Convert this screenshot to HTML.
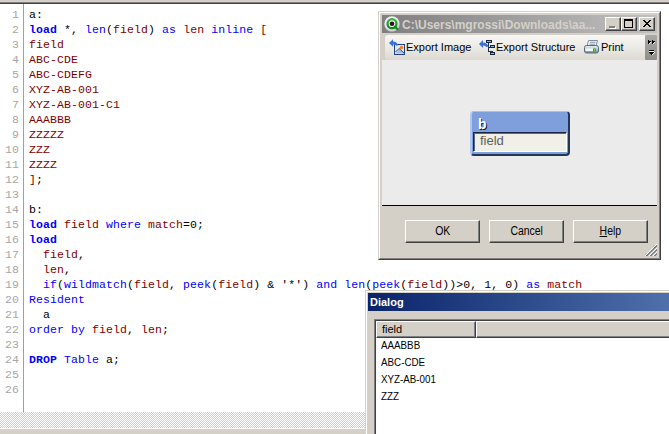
<!DOCTYPE html>
<html><head><meta charset="utf-8">
<style>
*{margin:0;padding:0;box-sizing:border-box}
html,body{width:669px;height:434px;overflow:hidden;background:#fff;position:relative}
body{font-family:"Liberation Sans",sans-serif}
.abs{position:absolute}
#topbar{left:0;top:0;width:669px;height:4px;background:linear-gradient(#d4d0c8 0,#d4d0c8 2px,#808080 2px,#808080 3px,#404040 3px)}
#gutter{left:0;top:4px;width:23px;height:408px;background:#fff}
#gline{left:23px;top:4px;width:1px;height:408px;background:#a0a0a0}
#nums{left:0;top:6.5px;width:19px;font-family:"Liberation Mono",monospace;font-size:11.5px;line-height:15px;color:#a6a6a6;text-align:right;letter-spacing:0.1px;white-space:pre}
#code{left:29px;top:6.5px;font-family:"Liberation Mono",monospace;font-size:11.5px;line-height:15px;color:#000;letter-spacing:0.1px;white-space:pre}
.k{color:#0000ff}
.b{color:#0000ff;font-weight:bold}
.f{color:#800000}
#split{left:0;top:412px;width:669px;height:16px}
#botw{left:0;top:428px;width:669px;height:1px;background:#fff}
#botf{left:0;top:429px;width:669px;height:5px;background:#d4d0c8}

/* dialog 1 */
#d1{left:378px;top:11px;width:283px;height:249px;background:#d4d0c8;border-top:1px solid #d4d0c8;border-left:1px solid #d4d0c8;border-right:1px solid #404040;border-bottom:1px solid #404040}
#d1i{left:0;top:0;right:0;bottom:0;border-top:1px solid #fff;border-left:1px solid #fff;border-right:1px solid #808080;border-bottom:1px solid #808080}
#t1{left:382px;top:15px;width:275px;height:18px;background:linear-gradient(to right,#808080,#c0c0c0)}
#t1txt{left:402px;top:19px;font-size:12px;font-weight:bold;color:#d4d0c8;white-space:nowrap;line-height:13px}
.cb{position:absolute;top:17px;width:16px;height:14px;background:#d4d0c8;border-top:1px solid #fff;border-left:1px solid #fff;border-right:1px solid #404040;border-bottom:1px solid #404040;box-shadow:inset -1px -1px 0 #808080}
#tb{left:385px;top:35px;width:261px;height:25px;border-radius:3px 0 0 3px;background:linear-gradient(#f8f7f4,#e9e7e1 60%,#dcd9d1)}
#chev{left:645px;top:35px;width:12px;height:25px;background:linear-gradient(#aaa9a5,#8e8e8c);border-radius:1px}
.tt{position:absolute;top:41px;font-size:11px;line-height:13px;color:#000;white-space:nowrap}
#c1{left:382px;top:60px;width:275px;height:145px;background:#ebebeb}
#sep{left:382px;top:205px;width:275px;height:1px;background:#000}
.btn{position:absolute;top:220px;width:75px;height:23px;background:#d4d0c8;border-top:1px solid #fff;border-left:1px solid #fff;border-right:1px solid #404040;border-bottom:1px solid #404040;box-shadow:inset -1px -1px 0 #808080;font-size:11px;line-height:20px;text-align:center;color:#000}

.bt{display:inline-block;font-size:12px;transform:scaleX(0.87);transform-origin:50% 50%}
/* table box */
#box{left:470px;top:111px;width:100px;height:45px;border-radius:4px;background:#7f9fdc;border-top:1px solid #a9bff0;border-left:2px solid #b2c6f2;border-right:2px solid #243558;border-bottom:2px solid #243558}
#boxt{left:478px;top:117px;font-family:"Liberation Sans",sans-serif;font-weight:bold;font-size:14px;color:#fff;text-shadow:1px 1px 0 #101828;line-height:15px}
#fld{left:473px;top:132px;width:94px;height:20px;background:#f0efe8;border-top:1px solid #1c2646;border-left:1px solid #1c2646;border-bottom:1px solid #fff;border-right:1px solid #fff;box-shadow:inset 1px 1px 0 #56668c}
#fldt{left:480px;top:133px;font-size:13px;color:#5e5e5e;line-height:15px}

/* dialog 2 */
#d2{left:365px;top:290px;width:310px;height:150px;background:#d4d0c8;border-top:1px solid #d4d0c8;border-left:1px solid #d4d0c8}
#d2i{left:0;top:0;right:0;bottom:0;border-top:1px solid #fff;border-left:1px solid #fff}
#t2{left:368px;top:293px;width:301px;height:18px;background:linear-gradient(to right,#0a246a,#4f70ab)}
#t2txt{left:370px;top:296px;font-size:11px;font-weight:bold;color:#fff;line-height:13px}
#lv{left:374px;top:319px;width:300px;height:120px;background:#fff;border-top:1px solid #808080;border-left:1px solid #808080}
#lvi{left:375px;top:320px;width:300px;height:120px;border-top:1px solid #404040;border-left:1px solid #404040}
.hd{position:absolute;top:321px;height:17px;background:#d4d0c8;border-top:1px solid #fff;border-left:1px solid #fff;border-right:1px solid #404040;border-bottom:1px solid #404040;box-shadow:inset -1px -1px 0 #808080;font-size:11px;line-height:14px;padding-left:5px;color:#000}
.li{position:absolute;left:381px;font-size:11px;line-height:13px;color:#000;transform:scaleX(0.89);transform-origin:0 0}
</style></head><body>
<div id="topbar" class="abs"></div>
<div id="gline" class="abs"></div>
<div id="nums" class="abs">1
2
3
4
5
6
7
8
9
10
11
12
13
14
15
16
17
18
19
20
21
22
23
24
25
26</div>
<div id="code" class="abs">a:
<span class="b">load</span> *, <span class="k">len</span>(<span class="f">field</span>) <span class="k">as</span> <span class="f">len</span> <span class="k">inline</span> <span class="f">[</span>
<span class="f">field</span>
<span class="f">ABC-CDE</span>
<span class="f">ABC-CDEFG</span>
<span class="f">XYZ-AB-001</span>
<span class="f">XYZ-AB-001-C1</span>
<span class="f">AAABBB</span>
<span class="f">ZZZZZ</span>
<span class="f">ZZZ</span>
<span class="f">ZZZZ</span>
<span class="f">]</span>;

b:
<span class="b">load</span> <span class="f">field</span> <span class="k">where</span> <span class="f">match</span>=0;
<span class="b">load</span>
  <span class="f">field</span>,
  <span class="f">len</span>,
  <span class="k">if</span>(<span class="k">wildmatch</span>(<span class="f">field</span>, <span class="k">peek</span>(<span class="f">field</span>) &amp; '*') <span class="k">and</span> <span class="k">len</span>(<span class="k">peek</span>(<span class="f">field</span>))&gt;0, 1, 0) <span class="k">as</span> <span class="f">match</span>
<span class="k">Resident</span>
  a
<span class="k">order by</span> <span class="f">field</span>, <span class="f">len</span>;

<span class="b">DROP</span> <span class="k">Table</span> a;</div>
<svg id="split" class="abs" width="669" height="16" shape-rendering="crispEdges"><defs><pattern id="chk" width="2" height="2" patternUnits="userSpaceOnUse"><rect width="2" height="2" fill="#d4d0c8"/><rect width="1" height="1" fill="#fff"/><rect x="1" y="1" width="1" height="1" fill="#fff"/></pattern></defs><rect width="669" height="16" fill="url(#chk)"/></svg>
<div id="botw" class="abs"></div>
<div id="botf" class="abs"></div>

<!-- dialog 1 -->
<div id="d1" class="abs"><div id="d1i" class="abs"></div></div>
<div id="t1" class="abs"></div>
<div id="t1txt" class="abs">C:\Users\mgrossi\Downloads\aa...</div>
<div class="cb" style="left:605px"></div>
<div class="cb" style="left:621px"></div>
<div class="cb" style="left:639px"></div>
<svg class="abs" style="left:600px;top:15px" width="60" height="18" shape-rendering="crispEdges">
<rect x="10" y="12" width="6" height="2" fill="#fff"/><rect x="9" y="11" width="6" height="2" fill="#808080"/>
<rect x="24" y="4" width="9" height="2" fill="#000"/><rect x="24" y="4" width="1" height="9" fill="#000"/><rect x="32" y="4" width="1" height="9" fill="#000"/><rect x="24" y="12" width="9" height="1" fill="#000"/>
</svg>
<svg class="abs" style="left:643px;top:20px" width="9" height="8" shape-rendering="crispEdges" fill="#000">
<rect x="0" y="0" width="2" height="1"/><rect x="6" y="0" width="2" height="1"/>
<rect x="1" y="1" width="2" height="1"/><rect x="5" y="1" width="2" height="1"/>
<rect x="2" y="2" width="4" height="1"/><rect x="3" y="3" width="2" height="1"/>
<rect x="2" y="4" width="4" height="1"/><rect x="1" y="5" width="2" height="1"/><rect x="5" y="5" width="2" height="1"/>
<rect x="0" y="6" width="2" height="1"/><rect x="6" y="6" width="2" height="1"/>
</svg>
<svg class="abs" style="left:382px;top:15px" width="20" height="18">
<defs><radialGradient id="qg" cx="0.45" cy="0.35" r="0.75"><stop offset="0" stop-color="#ffffff"/><stop offset="0.6" stop-color="#ebe8f0"/><stop offset="1" stop-color="#a8a8b0"/></radialGradient>
<linearGradient id="qgr" x1="0" y1="0" x2="0" y2="1"><stop offset="0" stop-color="#3cb43c"/><stop offset="1" stop-color="#108810"/></linearGradient></defs>
<circle cx="10" cy="9" r="7.7" fill="url(#qg)"/>
<circle cx="10" cy="8.7" r="4.5" fill="none" stroke="url(#qgr)" stroke-width="2.3"/>
<line x1="12.8" y1="11.6" x2="15.2" y2="14" stroke="#129012" stroke-width="2.2" stroke-linecap="round"/>
<circle cx="10" cy="8.7" r="2.3" fill="#1e1e1e"/>
</svg>
<div id="tb" class="abs"></div>
<div id="chev" class="abs"></div>
<svg class="abs" style="left:645px;top:35px" width="12" height="25" shape-rendering="crispEdges">
<rect x="3" y="5" width="1" height="4" fill="#000"/><rect x="4" y="6" width="1" height="2" fill="#000"/><rect x="5" y="6" width="1" height="1" fill="#000"/>
<rect x="7" y="5" width="1" height="4" fill="#000"/><rect x="8" y="6" width="1" height="2" fill="#000"/><rect x="9" y="6" width="1" height="1" fill="#000"/>
<rect x="4" y="8" width="1" height="1" fill="#fff"/><rect x="5" y="7" width="1" height="1" fill="#fff"/><rect x="8" y="8" width="1" height="1" fill="#fff"/><rect x="9" y="7" width="1" height="1" fill="#fff"/>
<rect x="4" y="15" width="5" height="1" fill="#000"/><rect x="4" y="16" width="5" height="1" fill="#fff"/>
<rect x="4" y="17" width="5" height="1" fill="#000"/><rect x="5" y="18" width="3" height="1" fill="#000"/><rect x="6" y="19" width="1" height="1" fill="#000"/>
<rect x="7" y="19" width="1" height="1" fill="#fff"/><rect x="8" y="18" width="1" height="1" fill="#fff"/><rect x="9" y="17" width="1" height="1" fill="#fff"/>
</svg>
<svg class="abs" style="left:388px;top:38px" width="18" height="18">
<rect x="6.5" y="6.5" width="10" height="10" fill="#dfe9f7" stroke="#1f3f8f" stroke-width="1"/>
<path d="M7.5 15.5 L11 11 L13 12.5 L16.5 15.5 Z" fill="#a8c0e8"/>
<path d="M7.5 14 L11 10.5 L16 15" fill="none" stroke="#333" stroke-width="0.9"/>
<circle cx="13.5" cy="9.5" r="1.8" fill="#f08020"/>
<path d="M1 5 L5 1.2 L5 3.5 Q9 3.5 10 7.5 L8 7.5 Q7 6 5 6.5 L5 8.8 Z" fill="#3a70e0"/>
</svg>
<div class="tt" style="left:406px">Export Image</div>
<svg class="abs" style="left:478px;top:38px" width="18" height="18" shape-rendering="crispEdges">
<path d="M10 4 V13 H14 V16 M10 9 H12" fill="none" stroke="#203040" stroke-width="1"/>
<rect x="8" y="2" width="6" height="3" fill="#1a2440"/><rect x="9" y="3" width="4" height="1" fill="#8fb0e0"/>
<rect x="12" y="7" width="5" height="3" fill="#1a2440"/><rect x="13" y="8" width="3" height="1" fill="#8fb0e0"/>
<rect x="12" y="14" width="5" height="3" fill="#1a2440"/><rect x="13" y="15" width="3" height="1" fill="#8fb0e0"/>
<path d="M1 6 L5 2 L5 4.5 Q9 4.5 10.5 8.5 L8.5 9 Q7.5 7.5 5 7.5 L5 10 Z" fill="#3a70e0" shape-rendering="auto"/>
</svg>
<div class="tt" style="left:496px">Export Structure</div>
<svg class="abs" style="left:582px;top:37px" width="18" height="18">
<defs><linearGradient id="pb" x1="0" y1="0" x2="0" y2="1"><stop offset="0" stop-color="#e8f0f2"/><stop offset="0.5" stop-color="#b8ccd2"/><stop offset="1" stop-color="#6f8a94"/></linearGradient></defs>
<path d="M6.5 3.5 L15.5 3.5 L14 9 L5 9 Z" fill="#f2f5f6" stroke="#7890a0" stroke-width="1"/>
<line x1="8" y1="5.3" x2="13.5" y2="5.3" stroke="#8090a0" stroke-width="0.9"/><line x1="7.5" y1="7.2" x2="13" y2="7.2" stroke="#8090a0" stroke-width="0.9"/>
<rect x="2.5" y="8.5" width="14" height="7.5" rx="2" fill="url(#pb)" stroke="#50707c" stroke-width="1"/>
<rect x="3.5" y="11.5" width="7.5" height="2.5" fill="#f4fafc"/>
<rect x="11" y="11.5" width="3" height="3" fill="#2aa81e"/><rect x="12" y="12.3" width="1.2" height="1.2" fill="#d0f040"/>
</svg>
<div class="tt" style="left:601px">Print</div>
<div id="c1" class="abs"></div>
<div id="sep" class="abs"></div>
<div class="btn" style="left:405px"><span class="bt">OK</span></div>
<div class="btn" style="left:489px"><span class="bt">Cancel</span></div>
<div class="btn" style="left:573px"><span class="bt"><u>H</u>elp</span></div>
<svg class="abs" style="left:640px;top:240px" width="20" height="20" shape-rendering="crispEdges"><rect x="16" y="4" width="1" height="1" fill="#fff"/><rect x="15" y="5" width="1" height="1" fill="#fff"/><rect x="16" y="5" width="1" height="1" fill="#808080"/><rect x="14" y="6" width="1" height="1" fill="#fff"/><rect x="15" y="6" width="1" height="1" fill="#808080"/><rect x="16" y="6" width="1" height="1" fill="#808080"/><rect x="13" y="7" width="1" height="1" fill="#fff"/><rect x="14" y="7" width="1" height="1" fill="#808080"/><rect x="15" y="7" width="1" height="1" fill="#808080"/><rect x="12" y="8" width="1" height="1" fill="#fff"/><rect x="13" y="8" width="1" height="1" fill="#808080"/><rect x="14" y="8" width="1" height="1" fill="#808080"/><rect x="16" y="8" width="1" height="1" fill="#fff"/><rect x="11" y="9" width="1" height="1" fill="#fff"/><rect x="12" y="9" width="1" height="1" fill="#808080"/><rect x="13" y="9" width="1" height="1" fill="#808080"/><rect x="15" y="9" width="1" height="1" fill="#fff"/><rect x="16" y="9" width="1" height="1" fill="#808080"/><rect x="10" y="10" width="1" height="1" fill="#fff"/><rect x="11" y="10" width="1" height="1" fill="#808080"/><rect x="12" y="10" width="1" height="1" fill="#808080"/><rect x="14" y="10" width="1" height="1" fill="#fff"/><rect x="15" y="10" width="1" height="1" fill="#808080"/><rect x="16" y="10" width="1" height="1" fill="#808080"/><rect x="9" y="11" width="1" height="1" fill="#fff"/><rect x="10" y="11" width="1" height="1" fill="#808080"/><rect x="11" y="11" width="1" height="1" fill="#808080"/><rect x="13" y="11" width="1" height="1" fill="#fff"/><rect x="14" y="11" width="1" height="1" fill="#808080"/><rect x="15" y="11" width="1" height="1" fill="#808080"/><rect x="8" y="12" width="1" height="1" fill="#fff"/><rect x="9" y="12" width="1" height="1" fill="#808080"/><rect x="10" y="12" width="1" height="1" fill="#808080"/><rect x="12" y="12" width="1" height="1" fill="#fff"/><rect x="13" y="12" width="1" height="1" fill="#808080"/><rect x="14" y="12" width="1" height="1" fill="#808080"/><rect x="16" y="12" width="1" height="1" fill="#fff"/><rect x="7" y="13" width="1" height="1" fill="#fff"/><rect x="8" y="13" width="1" height="1" fill="#808080"/><rect x="9" y="13" width="1" height="1" fill="#808080"/><rect x="11" y="13" width="1" height="1" fill="#fff"/><rect x="12" y="13" width="1" height="1" fill="#808080"/><rect x="13" y="13" width="1" height="1" fill="#808080"/><rect x="15" y="13" width="1" height="1" fill="#fff"/><rect x="16" y="13" width="1" height="1" fill="#808080"/><rect x="6" y="14" width="1" height="1" fill="#fff"/><rect x="7" y="14" width="1" height="1" fill="#808080"/><rect x="8" y="14" width="1" height="1" fill="#808080"/><rect x="10" y="14" width="1" height="1" fill="#fff"/><rect x="11" y="14" width="1" height="1" fill="#808080"/><rect x="12" y="14" width="1" height="1" fill="#808080"/><rect x="14" y="14" width="1" height="1" fill="#fff"/><rect x="15" y="14" width="1" height="1" fill="#808080"/><rect x="16" y="14" width="1" height="1" fill="#808080"/><rect x="5" y="15" width="1" height="1" fill="#fff"/><rect x="6" y="15" width="1" height="1" fill="#808080"/><rect x="7" y="15" width="1" height="1" fill="#808080"/><rect x="9" y="15" width="1" height="1" fill="#fff"/><rect x="10" y="15" width="1" height="1" fill="#808080"/><rect x="11" y="15" width="1" height="1" fill="#808080"/><rect x="13" y="15" width="1" height="1" fill="#fff"/><rect x="14" y="15" width="1" height="1" fill="#808080"/><rect x="15" y="15" width="1" height="1" fill="#808080"/></svg>
<div id="box" class="abs"></div>
<div id="fld" class="abs"></div>
<div id="boxt" class="abs">b</div>
<div id="fldt" class="abs">field</div>

<!-- dialog 2 -->
<div id="d2" class="abs"><div id="d2i" class="abs"></div></div>
<div id="t2" class="abs"></div>
<div id="t2txt" class="abs">Dialog</div>
<div id="lv" class="abs"></div>
<div id="lvi" class="abs"></div>
<div class="hd" style="left:376px;width:100px">field</div>
<div class="hd" style="left:476px;width:200px"></div>
<div class="li" style="top:339px">AAABBB</div>
<div class="li" style="top:356px">ABC-CDE</div>
<div class="li" style="top:373px">XYZ-AB-001</div>
<div class="li" style="top:390px">ZZZ</div>
</body></html>
